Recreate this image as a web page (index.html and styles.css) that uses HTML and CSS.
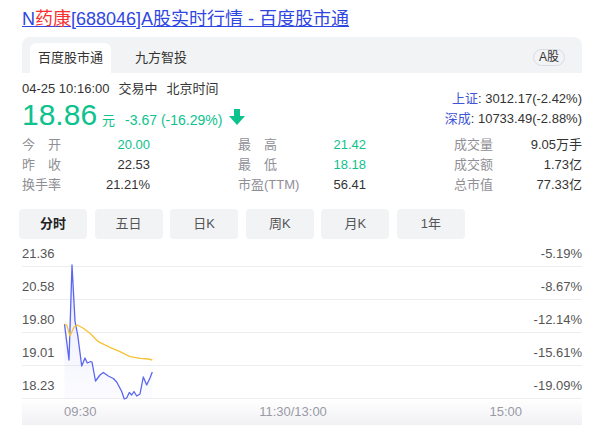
FILE: index.html
```html
<!DOCTYPE html>
<html lang="zh-CN">
<head>
<meta charset="utf-8">
<title>N药康[688046]A股实时行情 - 百度股市通</title>
<link rel="stylesheet" href="styles.css">
</head>
<body>
<div class="page">
  <h1 class="title"><a href="#">N<em>药康</em>[688046]A股实时行情 - 百度股市通</a></h1>

  <div class="tabbar">
    <div class="tabs">
      <span class="tab active">百度股市通</span>
      <span class="tab">九方智投</span>
    </div>
    <span class="badge">A股</span>
  </div>

  <div class="quote-head">
    <div class="quote-main">
      <div class="status"><span>04-25 10:16:00</span><span class="st2">交易中</span><span>北京时间</span></div>
      <div class="price-line">
        <span class="price">18.86</span>
        <span class="unit">元</span>
        <span class="change">-3.67 (-16.29%)</span>
        <svg class="arrow" width="16" height="16" viewBox="0 0 16 16"><path d="M5 0h6v7h5l-8 9-8-9h5z" fill="#0cc28d"/></svg>
      </div>
    </div>
    <div class="indices">
      <div><span class="idx">上证</span>: 3012.17(-2.42%)</div>
      <div><span class="idx">深成</span>: 10733.49(-2.88%)</div>
    </div>
  </div>

  <div class="stats">
    <div class="stat-row">
      <div class="cell"><span class="lab">今　开</span><span class="val up">20.00</span></div>
      <div class="cell"><span class="lab">最　高</span><span class="val up">21.42</span></div>
      <div class="cell"><span class="lab">成交量</span><span class="val">9.05万手</span></div>
    </div>
    <div class="stat-row">
      <div class="cell"><span class="lab">昨　收</span><span class="val">22.53</span></div>
      <div class="cell"><span class="lab">最　低</span><span class="val up">18.18</span></div>
      <div class="cell"><span class="lab">成交额</span><span class="val">1.73亿</span></div>
    </div>
    <div class="stat-row">
      <div class="cell"><span class="lab">换手率</span><span class="val">21.21%</span></div>
      <div class="cell"><span class="lab">市盈(TTM)</span><span class="val">56.41</span></div>
      <div class="cell"><span class="lab">总市值</span><span class="val">77.33亿</span></div>
    </div>
  </div>

  <div class="periods">
    <span class="period on">分时</span>
    <span class="period">五日</span>
    <span class="period">日K</span>
    <span class="period">周K</span>
    <span class="period">月K</span>
    <span class="period">1年</span>
  </div>

  <div class="chart">
    <div class="grow first"><span>21.36</span><span>-5.19%</span></div>
    <div class="grow"><span>20.58</span><span>-8.67%</span></div>
    <div class="grow"><span>19.80</span><span>-12.14%</span></div>
    <div class="grow"><span>19.01</span><span>-15.61%</span></div>
    <div class="grow"><span>18.23</span><span>-19.09%</span></div>
    <svg class="plot" width="560" height="158" viewBox="0 0 560 158">
      <defs>
        <linearGradient id="fillg" x1="0" y1="0" x2="0" y2="1">
          <stop offset="0" stop-color="#5b66f0" stop-opacity="0.14"/>
          <stop offset="1" stop-color="#5b66f0" stop-opacity="0.02"/>
        </linearGradient>
      </defs>
      <polygon fill="url(#fillg)" points="42.5,83 47,119 50,24 53,80 55.7,94 59.7,125 63,117 65.3,122 68.7,120.5 70,121 73.5,140 78,134 81.3,131.5 86.3,135 91.3,137.5 94.7,141 99.7,150.5 102.3,158 104.7,157 107.3,151.5 109.7,154 112,150.5 114.7,155 118,153 121.3,136 124.7,144 128,137 130.3,131 130.3,158 42.5,158"/>
      <polyline fill="none" stroke="#5b66f0" stroke-width="1.3" stroke-linejoin="round" points="42.5,83 47,119 50,24 53,80 55.7,94 59.7,125 63,117 65.3,122 68.7,120.5 70,121 73.5,140 78,134 81.3,131.5 86.3,135 91.3,137.5 94.7,141 99.7,150.5 102.3,158 104.7,157 107.3,151.5 109.7,154 112,150.5 114.7,155 118,153 121.3,136 124.7,144 128,137 130.3,131"/>
      <polyline fill="none" stroke="#f7c234" stroke-width="1.3" stroke-linejoin="round" points="42.5,83 44.7,84 48,95 52,86 55.3,84 61.3,87.3 68,92.3 76.3,100.7 88,106.3 98,110.7 108,115.7 118,117.3 126.3,118 130.3,119"/>
    </svg>
    <div class="xaxis"><span>09:30</span><span>11:30/13:00</span><span>15:00</span></div>
  </div>
</div>
</body>
</html>
```

FILE: styles.css
```css
* { box-sizing: border-box; }
html, body { margin: 0; padding: 0; background: #fff; }
body {
  font-family: "Liberation Sans", "Noto Sans CJK SC", sans-serif;
  font-size: 13px;
  color: #333;
}
.page { width: 608px; padding: 7px 26px 0 22px; }

.title { margin: 0; font-size: 18px; font-weight: normal; line-height: 24px; }
.title a { color: #2f46e2; text-decoration: underline; }
.title em { font-style: normal; color: #f73131; }

.tabbar {
  margin-top: 6px;
  height: 36px;
  background: #f2f3f5;
  border-radius: 8px 8px 0 0;
  padding: 6px 17px 0 8px;
  display: flex;
  justify-content: space-between;
  align-items: flex-start;
}
.tabs { display: flex; gap: 16px; }
.tab { height: 30px; line-height: 30px; padding: 0 8px; font-size: 13px; color: #333; border-radius: 6px 6px 0 0; }
.tab.active { background: #fff; }
.badge {
  margin-top: 6px;
  height: 17px; line-height: 15px;
  padding: 0 5px;
  border: 1px solid #d9dce3;
  border-radius: 9px;
  font-size: 12px;
  color: #333;
}

.quote-head { display: flex; justify-content: space-between; margin-top: 6px; }
.status { height: 20px; line-height: 20px; font-size: 13px; color: #333; }
.status span { margin-right: 9px; }
.price-line { display: flex; align-items: baseline; height: 32px; color: #0cc28d; }
.price { font-size: 30px; line-height: 32px; }
.unit { font-size: 13px; line-height: 16px; margin-left: 5px; }
.change { font-size: 14px; line-height: 16px; margin-left: 10px; }
.arrow { align-self: baseline; margin-left: 7px; margin-bottom: -2px; }
.indices { padding-top: 10px; text-align: right; font-size: 13px; line-height: 20px; color: #333; }
.idx { color: #3f55d6; }

.stats { margin-top: 4px; }
.stat-row { display: flex; justify-content: space-between; height: 20px; line-height: 20px; }
.cell { width: 128px; display: flex; justify-content: space-between; }
.lab { color: #8f8f96; }
.val { color: #333; }
.val.up { color: #0cc28d; }

.periods { margin: 14px 0 0 -3px; display: flex; gap: 7.6px; }
.period {
  width: 68px; height: 30px; line-height: 30px;
  text-align: center;
  background: #f2f3f5;
  border-radius: 4px;
  font-size: 13px;
  color: #555;
}
.period.on { color: #222; font-weight: bold; }

.chart { position: relative; margin-top: 2px; }
.grow {
  height: 33px;
  border-bottom: 1px solid #eeeef0;
  display: flex;
  justify-content: space-between;
  align-items: flex-end;
  padding-bottom: 5px;
  line-height: 14px;
  font-size: 13px;
  color: #555;
}
.grow.first { height: 26px; }
.plot { position: absolute; left: 0; top: 0; overflow: visible; }
.xaxis {
  height: 26px;
  line-height: 26px;
  padding: 0 60px 0 42px;
  display: flex;
  justify-content: space-between;
  font-size: 13px;
  color: #9a9aa6;
  background: linear-gradient(#fff, #f1f1f4);
}
```
